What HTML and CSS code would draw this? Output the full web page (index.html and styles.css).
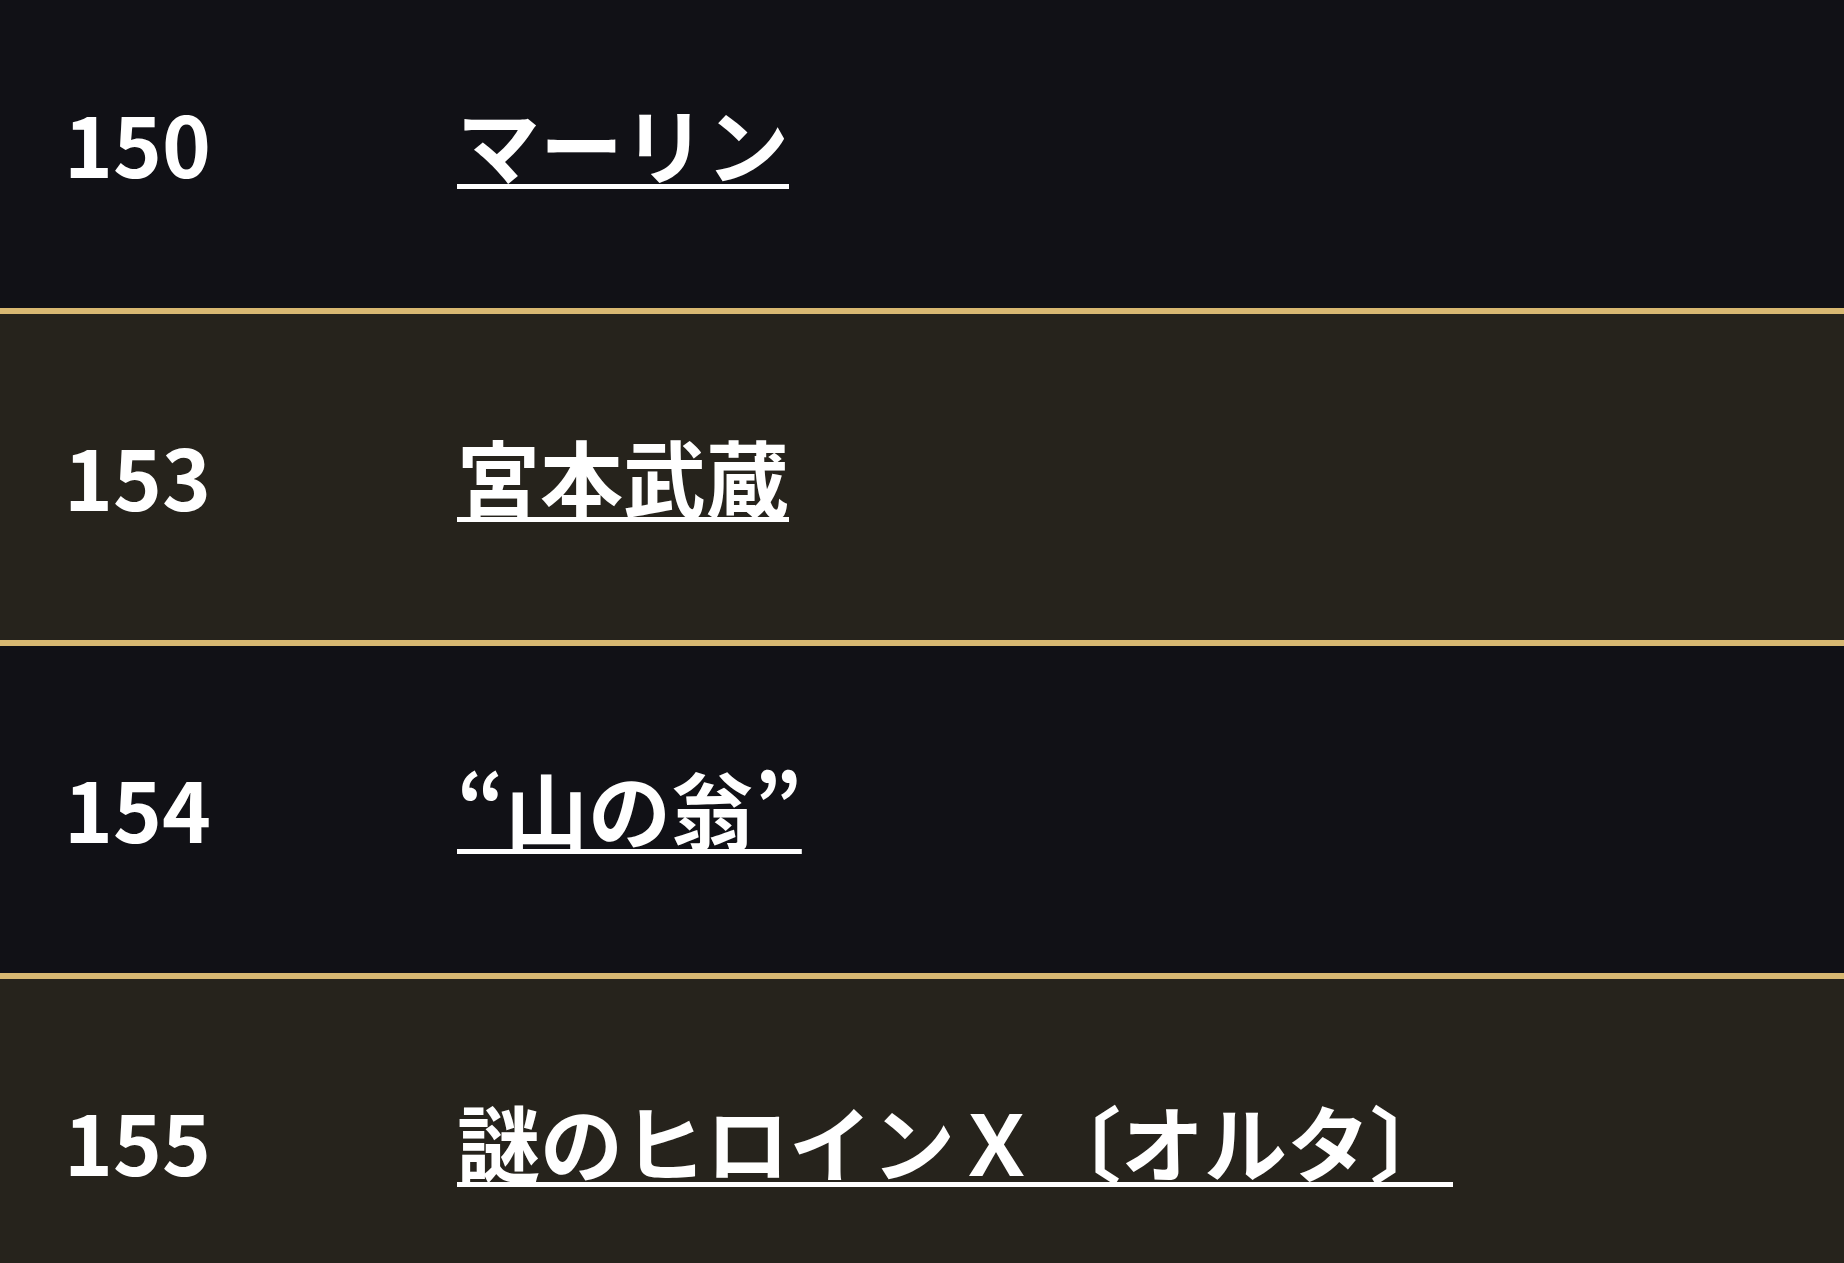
FILE: index.html
```html
<!DOCTYPE html>
<html lang="ja">
<head>
<meta charset="utf-8">
<title>サーヴァント一覧</title>
<link rel="stylesheet" href="styles.css">
</head>
<body>
<div class="list">
  <div class="row">
    <div class="num">150</div>
    <div class="name"><a href="#">マーリン</a></div>
  </div>
  <div class="row alt">
    <div class="num">153</div>
    <div class="name"><a href="#">宮本武蔵</a></div>
  </div>
  <div class="row">
    <div class="num">154</div>
    <div class="name"><a href="#">“山の翁”</a></div>
  </div>
  <div class="row alt">
    <div class="num">155</div>
    <div class="name"><a href="#">謎のヒロインＸ〔オルタ〕</a></div>
  </div>
</div>
</body>
</html>
```

FILE: styles.css
```css
html, body {
  margin: 0;
  padding: 0;
  background: #111116;
  overflow: hidden;
}

body {
  font-family: "Noto Sans CJK JP", "Noto Sans", sans-serif;
  color: #ffffff;
}

.list {
  margin-top: -19px;
}

.row {
  display: grid;
  grid-template-columns: 373px 1fr;
  align-items: center;
  box-sizing: border-box;
  height: 332.5px;
  padding-bottom: 4px;
  border-bottom: 6px solid #d8b872;
  background: #111116;
}

.row.alt {
  background: #26231c;
}

.num {
  padding-left: 64px;
  font-size: 83px;
  font-weight: 700;
  line-height: 120px;
}

.name {
  padding-left: 84px;
  font-size: 83px;
  font-weight: 700;
  line-height: 120px;
  white-space: nowrap;
}

.name a {
  color: #ffffff;
  text-decoration: underline;
  text-decoration-thickness: 5px;
  text-underline-offset: 6px;
}
```
